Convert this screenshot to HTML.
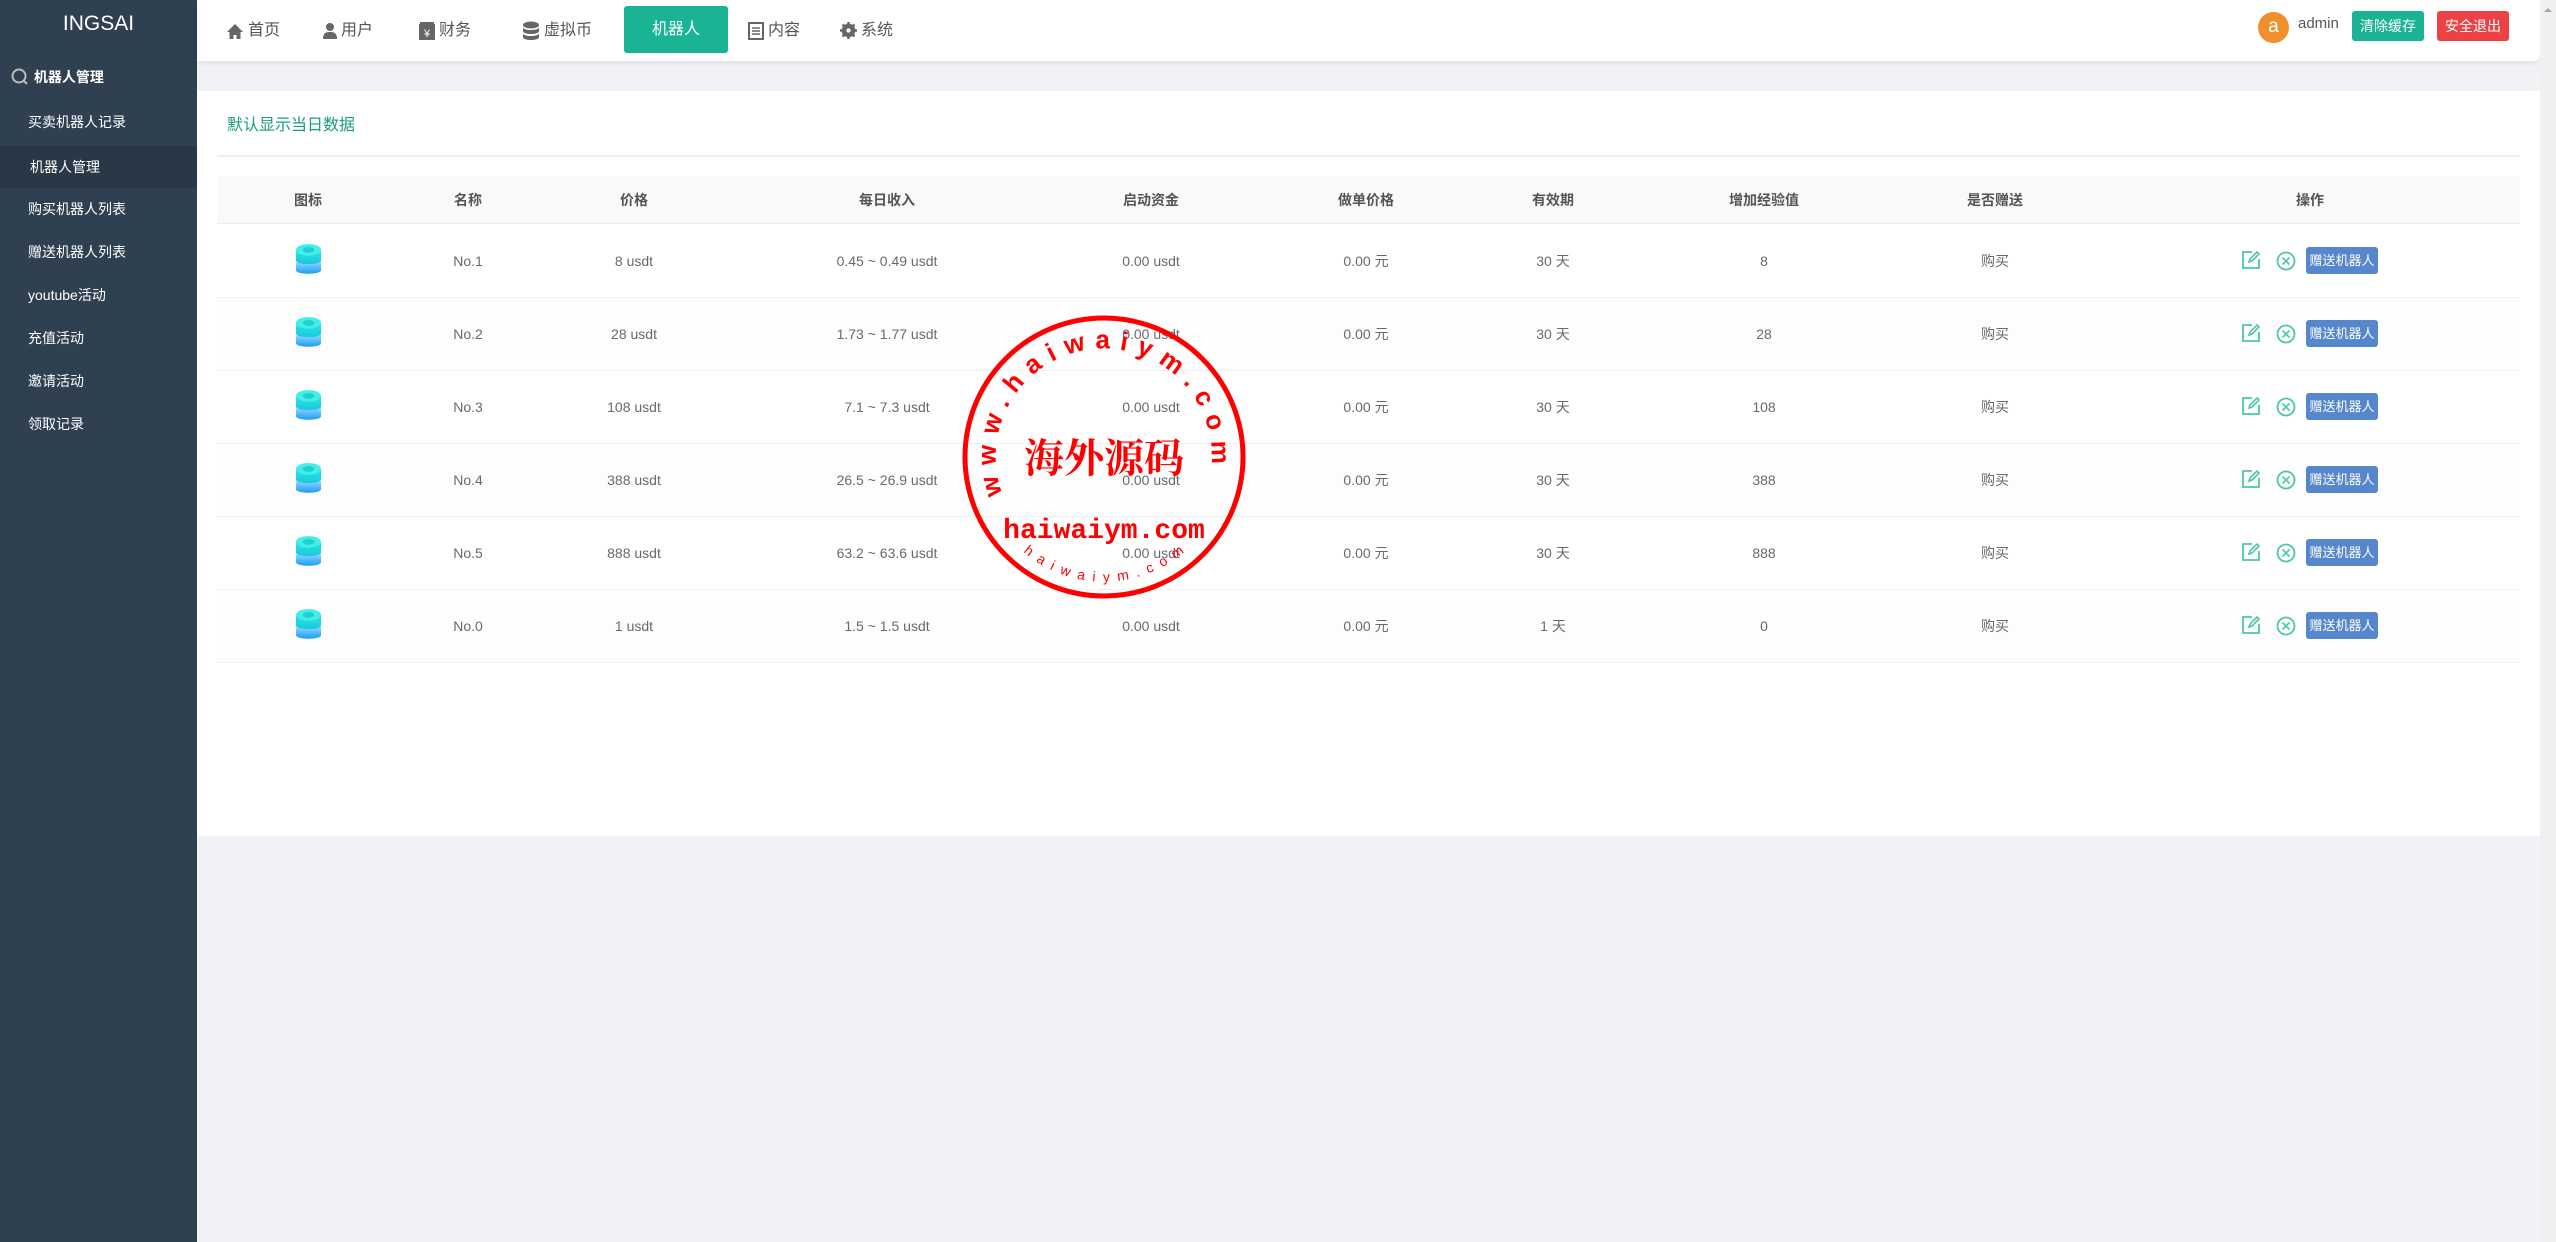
<!DOCTYPE html>
<html><head><meta charset="utf-8">
<style>
*{margin:0;padding:0;box-sizing:border-box}
body{width:2556px;height:1242px;background:#f1f2f5;font-family:"Liberation Sans","Noto Sans CJK SC",sans-serif;position:relative;overflow:hidden;color:#676a6c}
.side{position:absolute;left:0;top:0;width:197px;height:1242px;background:#2f4050}
.logo{position:absolute;top:12px;width:197px;text-align:center;color:#fff;font-size:21px}
.sh{position:absolute;left:10px;top:67px;color:#fff;font-size:14px;font-weight:bold;display:flex;align-items:center}
.si{position:absolute;left:28px;color:#fff;font-size:14px;height:42px;line-height:42px;width:197px}
.act{background:#293846;left:0;padding-left:30px}
.top{position:absolute;left:197px;top:0;width:2343px;height:61px;background:#fff;box-shadow:0 2px 6px rgba(0,0,0,.08);border-radius:0 0 6px 0}
.nv{position:absolute;top:0;height:61px;line-height:58px;font-size:16px;color:#555;display:flex;align-items:center}
.nv svg{margin-right:4px}
.robot{position:absolute;left:624px;top:6px;width:104px;height:47px;background:#1ab394;color:#fff;font-size:16px;text-align:center;line-height:47px;border-radius:3px}
.av{position:absolute;left:2258px;top:12px;width:31px;height:31px;border-radius:50%;background:#f0902c;color:#fff;text-align:center;line-height:29px;font-size:19px}
.adm{position:absolute;left:2298px;top:15px;font-size:15px;color:#555}
.btn{position:absolute;top:11px;height:30px;line-height:30px;width:72px;text-align:center;color:#fff;font-size:14px;border-radius:3px}
.scroll{position:absolute;left:2540px;top:0;width:16px;height:1242px;background:#f0f0f0}
.panel{position:absolute;left:197px;top:91px;width:2343px;height:745px;background:#fff}
.title{position:absolute;left:227px;top:111px;font-size:16px;color:#1a9c7f}
.hl{position:absolute;left:217px;top:155px;width:2303px;height:2px;background:#eeeeee}
.thead{position:absolute;left:217px;top:176px;width:2303px;height:48px;background:#f8f9f9;border-bottom:1px solid #ebebeb}
.c{position:absolute;transform:translateX(-50%);white-space:nowrap;font-size:14px;line-height:20px;height:20px}
.th{font-weight:bold;color:#555;top:190px}
.row{position:absolute;left:217px;width:2303px;height:73px;border-bottom:1px solid #f0f0f0}
.gb{position:absolute;width:72px;height:27px;background:#5687cc;color:#fff;font-size:13px;text-align:center;line-height:27px;border-radius:3px}
</style></head><body>
<div class="side">
<div class="logo">INGSAI</div>
<div class="sh"><svg width="20" height="20" viewBox="0 0 20 20"><circle cx="9" cy="9" r="6.5" fill="none" stroke="#bbb" stroke-width="2"/><path d="M13.5 13.5L17 17" stroke="#bbb" stroke-width="2"/></svg>&nbsp;机器人管理</div>
<div class="si" style="top:101px">买卖机器人记录</div>
<div class="si act" style="top:146px">机器人管理</div>
<div class="si" style="top:188px">购买机器人列表</div>
<div class="si" style="top:231px">赠送机器人列表</div>
<div class="si" style="top:274px">youtube活动</div>
<div class="si" style="top:317px">充值活动</div>
<div class="si" style="top:360px">邀请活动</div>
<div class="si" style="top:403px">领取记录</div>
</div>
<div class="top">
<div class="nv" style="left:29px"><svg width="18" height="18" viewBox="0 0 18 18"><path d="M9 2L1 10h2.5v7h4v-4h3v4h4v-7H17z" fill="#666"/></svg>首页</div>
<div class="nv" style="left:126px"><svg width="14" height="18" viewBox="0 0 14 18"><circle cx="7" cy="5" r="4" fill="#666"/><path d="M0 17c0-6 3-7 7-7s7 1 7 7z" fill="#666"/></svg>用户</div>
<div class="nv" style="left:222px"><svg width="16" height="18" viewBox="0 0 16 18"><rect x="0" y="2" width="16" height="16" fill="#666"/><rect x="1" y="0" width="14" height="2" fill="#666"/><text x="8" y="15" font-size="11" fill="#fff" text-anchor="middle">¥</text></svg>财务</div>
<div class="nv" style="left:325px"><svg width="18" height="20" viewBox="0 0 18 20"><ellipse cx="9" cy="4" rx="8" ry="3.5" fill="#666"/><path d="M1 6c0 4 16 4 16 0v4c0 4-16 4-16 0zM1 12c0 4 16 4 16 0v4c0 4-16 4-16 0z" fill="#666"/></svg>虚拟币</div>
<div class="nv" style="left:551px"><svg width="16" height="18" viewBox="0 0 16 18"><rect x="1" y="1" width="14" height="16" fill="none" stroke="#666" stroke-width="2"/><path d="M4 6h8M4 9h8M4 12h8" stroke="#666" stroke-width="1.5"/></svg>内容</div>
<div class="nv" style="left:643px"><svg width="17" height="17" viewBox="0 0 20 20"><circle cx="10" cy="10" r="6" fill="none" stroke="#666" stroke-width="4"/><path d="M10 0v20M0 10h20M3 3l14 14M17 3L3 17" stroke="#666" stroke-width="3"/><circle cx="10" cy="10" r="2.5" fill="#fff"/></svg>系统</div>
</div>
<div class="robot">机器人</div>
<div class="av">a</div>
<div class="adm">admin</div>
<div class="btn" style="left:2352px;background:#1ab394">清除缓存</div>
<div class="btn" style="left:2437px;background:#ed4245">安全退出</div>
<div class="scroll"><svg width="16" height="12" style="position:absolute;top:4px"><path d="M4 8l4-4 4 4z" fill="#aaa"/></svg></div>
<div class="panel"></div>
<div class="title">默认显示当日数据</div>
<div class="hl"></div>
<div class="thead"></div>
<div class="c th" style="left:308px">图标</div>
<div class="c th" style="left:468px">名称</div>
<div class="c th" style="left:634px">价格</div>
<div class="c th" style="left:887px">每日收入</div>
<div class="c th" style="left:1151px">启动资金</div>
<div class="c th" style="left:1366px">做单价格</div>
<div class="c th" style="left:1553px">有效期</div>
<div class="c th" style="left:1764px">增加经验值</div>
<div class="c th" style="left:1995px">是否赠送</div>
<div class="c th" style="left:2310px">操作</div>

<div class="row" style="top:225px"></div>
<div class="row" style="top:298px;background:#fdfdfd"></div>
<div class="row" style="top:371px"></div>
<div class="row" style="top:444px;background:#fdfdfd"></div>
<div class="row" style="top:517px"></div>
<div class="row" style="top:590px;background:#fdfdfd"></div>

<svg width="0" height="0" style="position:absolute"><defs>
<linearGradient id="g1" x1="0" x2="0" y1="0" y2="1"><stop offset="0" stop-color="#2de6e0"/><stop offset="1" stop-color="#18c8de"/></linearGradient>
<linearGradient id="g2" x1="0" x2="0" y1="0" y2="1"><stop offset="0" stop-color="#8cd4ff"/><stop offset="1" stop-color="#1a9cf5"/></linearGradient>
<symbol id="ic" viewBox="0 0 28 36"><path d="M1 20v8c0 5 26 5 26 0v-8z" fill="url(#g2)"/><path d="M1 7v11c0 5 26 5 26 0V7z" fill="url(#g1)"/><ellipse cx="14" cy="7" rx="13" ry="6" fill="#42eee6"/><ellipse cx="14" cy="7" rx="6" ry="3" fill="#20cfd0"/></symbol>
<symbol id="ed" viewBox="0 0 20 20"><path d="M11 2H2v16h16V9" fill="none" stroke="#4cc6a8" stroke-width="1.8"/><path d="M8 12l1-3 7-7 2 2-7 7z" fill="none" stroke="#4cc6a8" stroke-width="1.6"/></symbol>
<symbol id="xx" viewBox="0 0 20 20"><circle cx="10" cy="10" r="8.5" fill="none" stroke="#4cc6a8" stroke-width="1.8"/><path d="M6.5 6.5l7 7M13.5 6.5l-7 7" stroke="#4cc6a8" stroke-width="1.6"/></symbol>
</defs></svg>

<div id="rows"></div>
<script>
var d=[["No.1","8 usdt","0.45 ~ 0.49 usdt","30 天","8"],["No.2","28 usdt","1.73 ~ 1.77 usdt","30 天","28"],["No.3","108 usdt","7.1 ~ 7.3 usdt","30 天","108"],["No.4","388 usdt","26.5 ~ 26.9 usdt","30 天","388"],["No.5","888 usdt","63.2 ~ 63.6 usdt","30 天","888"],["No.0","1 usdt","1.5 ~ 1.5 usdt","1 天","0"]];
var h="";
for(var i=0;i<6;i++){var y=261+i*73-10;var r=d[i];
h+='<svg style="position:absolute;left:295px;top:'+(y-8)+'px" width="27" height="35"><use href="#ic"/></svg>';
var cols=[[468,r[0]],[634,r[1]],[887,r[2]],[1151,"0.00 usdt"],[1366,"0.00 元"],[1553,r[3]],[1764,r[4]],[1995,"购买"]];
for(var j=0;j<cols.length;j++)h+='<div class="c" style="left:'+cols[j][0]+'px;top:'+y+'px">'+cols[j][1]+'</div>';
h+='<svg style="position:absolute;left:2241px;top:'+(y-1)+'px" width="20" height="20"><use href="#ed"/></svg>';
h+='<svg style="position:absolute;left:2276px;top:'+y+'px" width="20" height="20"><use href="#xx"/></svg>';
h+='<div class="gb" style="left:2306px;top:'+(y-4)+'px">赠送机器人</div>';}
document.getElementById("rows").innerHTML=h;
</script>

<svg style="position:absolute;left:0;top:0" width="2556" height="1242">
<defs>
<path id="arcT" d="M1002.5 494 A 108 108 0 1 1 1210 476"/>
<path id="arcB" d="M1016 545 A 124 124 0 0 0 1192 545"/>
</defs>
<circle cx="1104" cy="457" r="139" fill="none" stroke="#f00" stroke-width="5"/>
<text font-family="Liberation Sans,sans-serif" font-weight="bold" font-size="26" fill="#f00"><textPath href="#arcT" textLength="385" lengthAdjust="spacing">www.haiwaiym.com</textPath></text>
<text x="1104" y="472" text-anchor="middle" font-family="Noto Serif CJK SC,serif" font-weight="bold" font-size="40" fill="#f00">海外源码</text>
<text x="1104" y="538" text-anchor="middle" font-family="Liberation Mono,monospace" font-weight="bold" font-size="28" fill="#f00">haiwaiym.com</text>
<text font-family="Liberation Sans,sans-serif" font-size="14" fill="#f00"><textPath href="#arcB" startOffset="10" textLength="175" lengthAdjust="spacing">haiwaiym.com</textPath></text>
</svg>
</body></html>
